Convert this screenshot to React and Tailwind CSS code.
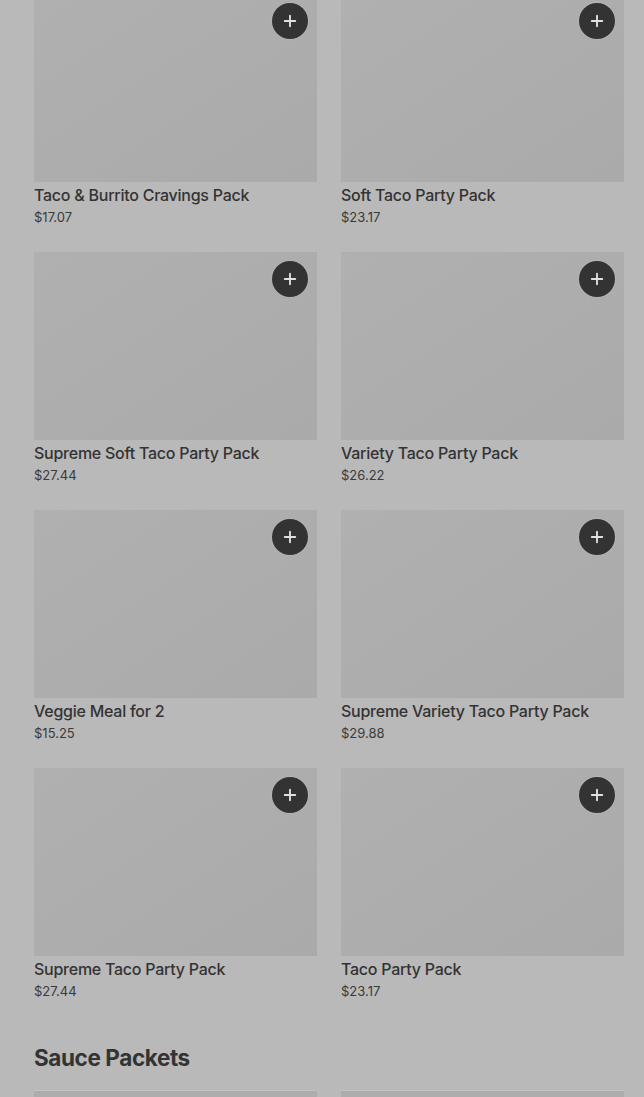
import { Plus } from "lucide-react";

const items = [
  { name: "Taco & Burrito Cravings Pack", price: "$17.07" },
  { name: "Soft Taco Party Pack", price: "$23.17" },
  { name: "Supreme Soft Taco Party Pack", price: "$27.44" },
  { name: "Variety Taco Party Pack", price: "$26.22" },
  { name: "Veggie Meal for 2", price: "$15.25" },
  { name: "Supreme Variety Taco Party Pack", price: "$29.88" },
  { name: "Supreme Taco Party Pack", price: "$27.44" },
  { name: "Taco Party Pack", price: "$23.17" },
];

function ItemCard({ item }) {
  return (
    <div className="flex flex-col">
      <div className="relative h-[188px] bg-gradient-to-br from-[#b0b0b0] to-[#aaaaaa]">
        <button className="absolute right-[9px] top-[9px] flex h-9 w-9 items-center justify-center rounded-full bg-[#333333] text-[#e0e0e0] shadow-[0_0_0_1px_rgba(255,255,255,0.08)]">
          <Plus size={18} strokeWidth={2.5} />
        </button>
      </div>
      <p className="mt-[2px] text-[16px] leading-[22px] font-medium tracking-[-0.25px] text-[#333333]">
        {item.name}
      </p>
      <p className="text-[13px] leading-[22px] text-[#3a3a3a]">{item.price}</p>
    </div>
  );
}

export default function App() {
  return (
    <div
      className="min-h-screen overflow-hidden bg-[#b9b9b9] pl-[34px] pr-[20px]"
      style={{ fontFamily: "Inter, 'Noto Sans', sans-serif" }}
    >
      <div className="-mt-[6px] grid grid-cols-2 gap-x-6 gap-y-[24px]">
        {items.map((item) => (
          <ItemCard key={item.name} item={item} />
        ))}
      </div>
      <h2 className="mt-[40px] text-[22.5px] leading-[32px] font-bold tracking-[-0.4px] text-[#333333]">
        Sauce Packets
      </h2>
      <div className="mt-[16px] grid grid-cols-2 gap-x-6">
        <div className="h-[188px] border-t border-[#c2c2c2] bg-[#adadad]" />
        <div className="h-[188px] border-t border-[#c2c2c2] bg-[#adadad]" />
      </div>
    </div>
  );
}
